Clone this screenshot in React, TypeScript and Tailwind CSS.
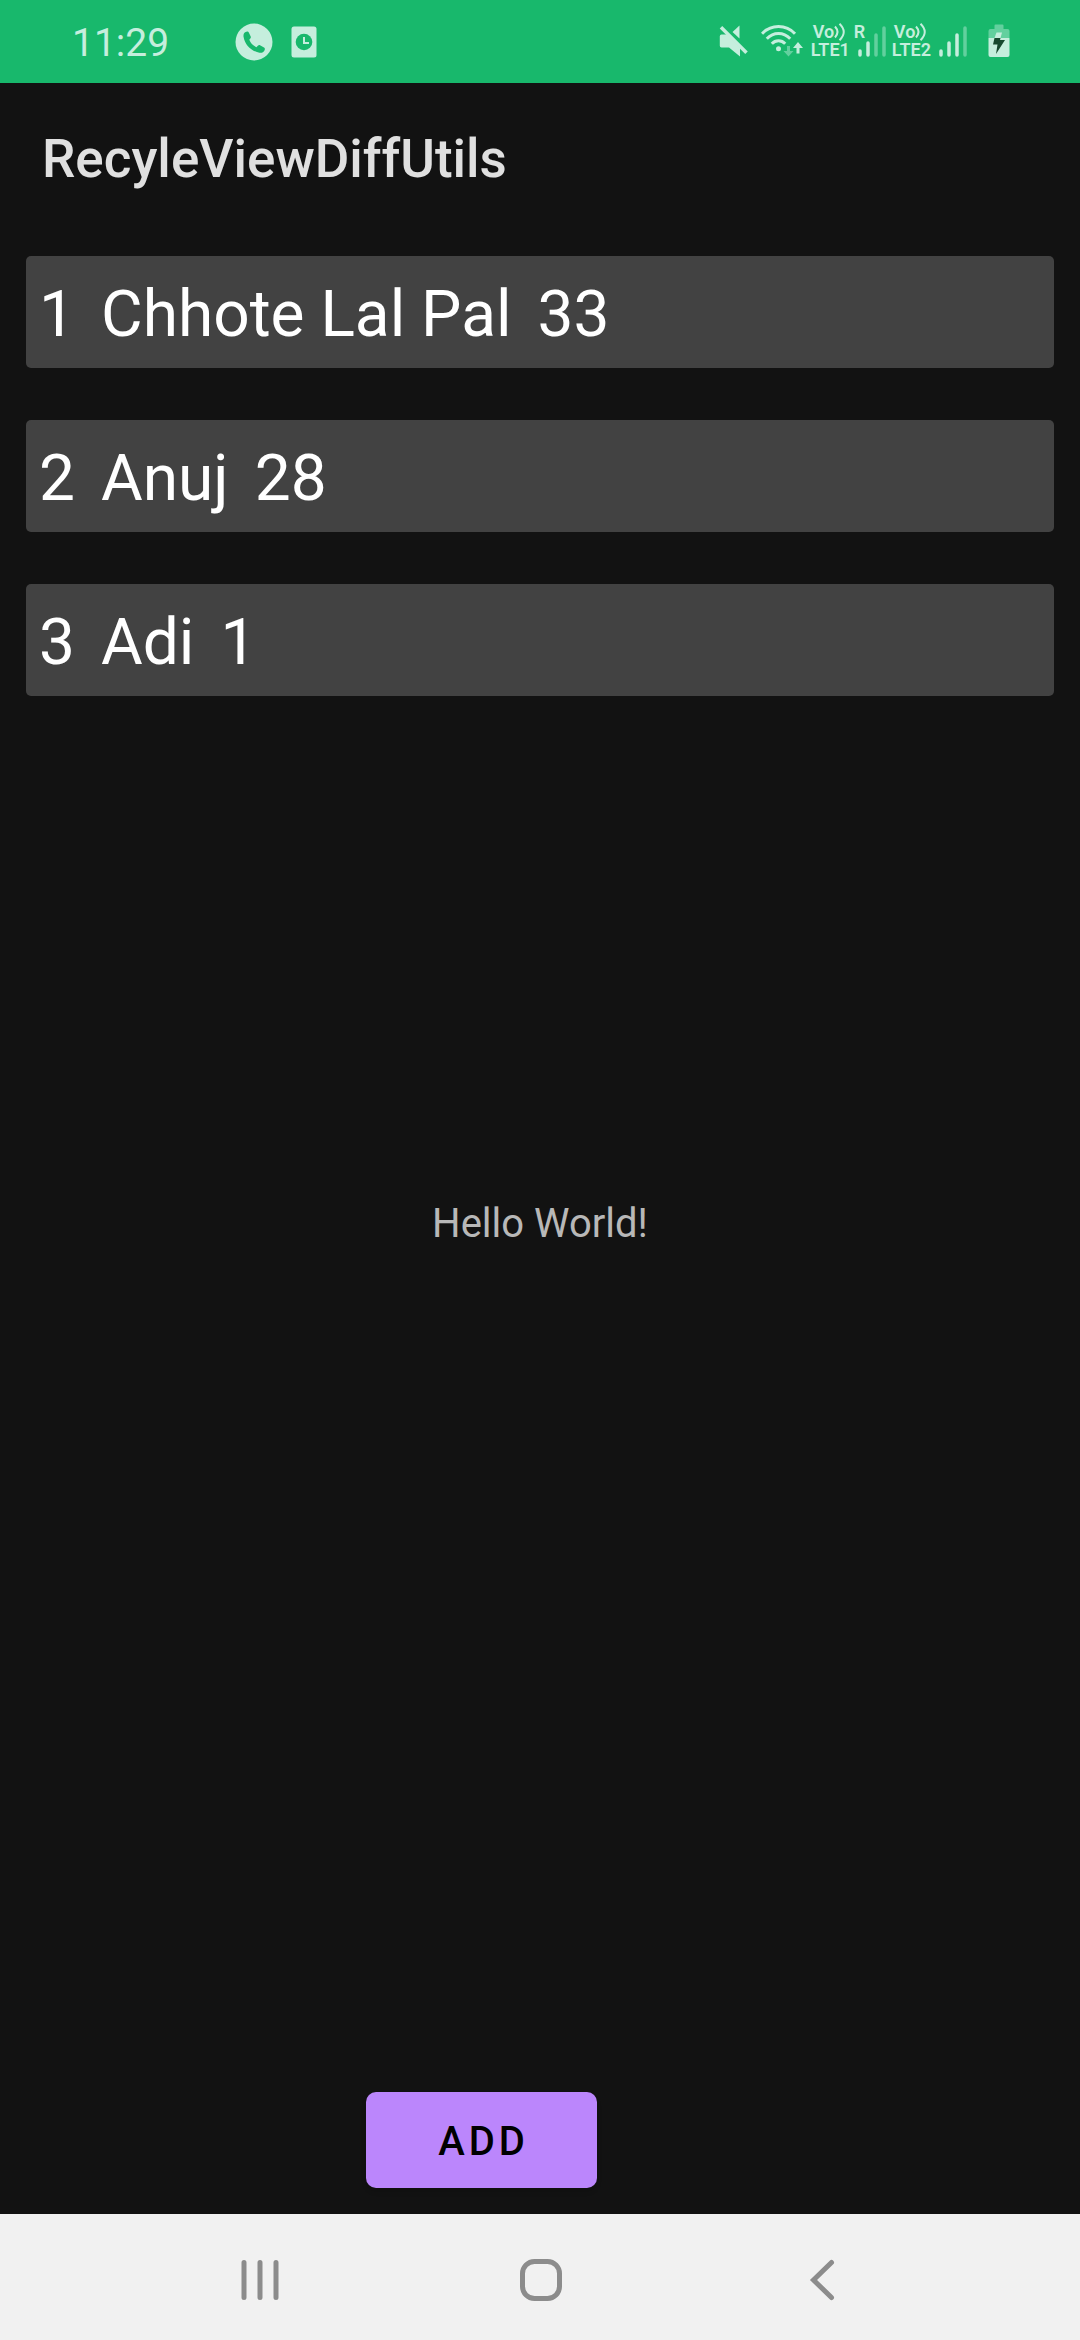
import React from "react";

const people = [
  { id: 1, name: "Chhote Lal Pal", age: 33 },
  { id: 2, name: "Anuj", age: 28 },
  { id: 3, name: "Adi", age: 1 },
];

function PhoneIcon() {
  return (
    <svg width="38" height="38" viewBox="0 0 38 38" aria-hidden="true">
      <circle cx="19" cy="19" r="18.5" fill="#c5eedd" />
      <path
        d="M12.2 8.6c-2.8.5-4.2 2.4-3.6 5.4 1.3 7.400 7 13.600 15 15.600 3 .7 5.600-.4 6.200-3.200.2-.9-.1-1.500-.8-1.900l-4-2.200c-.7-.4-1.400-.2-1.900.3l-1.700 1.600c-3.600-1.700-5.800-4.100-7.100-7.400l1.200-1.500c.4-.5.4-1.100.2-1.700l-1.900-4.200c-.3-.6-.9-.9-1.600-.8z"
        fill="#18b86c"
      />
    </svg>
  );
}

function DocClockIcon() {
  return (
    <svg width="26" height="32" viewBox="0 0 26 32" aria-hidden="true">
      <rect x="0.500" y="0.500" width="25" height="31" rx="2.500" fill="#c5eedd" />
      <circle cx="13" cy="16" r="8.300" fill="#18b86c" />
      <path d="M13 11v6h5" fill="none" stroke="#c5eedd" strokeWidth="2" />
    </svg>
  );
}

function MuteIcon() {
  return (
    <svg width="30" height="32" viewBox="0 0 30 32" aria-hidden="true">
      <path d="M20.500 0.500V13.500L13.500 7z" fill="#c5eedd" />
      <path d="M2.500 9.500H8L21 23V31.500L10 22.500H2.500Q0.800 22.500 0.800 20.800V11.200Q0.800 9.500 2.500 9.500z" fill="#c5eedd" />
      <path d="M3.800 0.300L29.500 26" stroke="#18b86c" strokeWidth="2" />
      <path d="M2 2.200L27.500 27.700" stroke="#c5eedd" strokeWidth="3.500" />
    </svg>
  );
}

function WifiIcon() {
  return (
    <svg width="42" height="32" viewBox="0 0 42 32" aria-hidden="true">
      <g fill="none" stroke="#c5eedd" strokeWidth="3">
        <path d="M1 8.800C10 -0.800 25 -0.800 34 8.800" />
        <path d="M5.800 13.800C12.500 6.800 22.500 6.800 29.200 13.800" />
        <path d="M10.800 18.800C14.500 14.800 20.500 14.800 24.200 18.800" />
      </g>
      <circle cx="17.500" cy="23.700" r="2.500" fill="#c5eedd" />
      <path d="M26 21h3v5h3.500l-5 5.500-5-5.500H26z" fill="#62d09e" />
      <path d="M35.500 28.500h3V23H42l-5-6-5 6h3.500z" fill="#c5eedd" />
    </svg>
  );
}

function VolteLabel({ sim }: { sim: number }) {
  return (
    <div className="flex flex-col text-[18px] leading-[18px] font-semibold">
      <span className="flex items-center pl-[2px]">
        Vo
        <svg width="12" height="18" viewBox="0 0 12 18" aria-hidden="true">
          <g fill="none" stroke="#c5eedd" strokeWidth="2">
            <path d="M1 3.500Q6 9 1 14.500" />
            <path d="M5.500 0.800Q14 9 5.500 17.200" />
          </g>
        </svg>
      </span>
      <span>LTE{sim}</span>
    </div>
  );
}

function SignalBars({ lit }: { lit: number }) {
  const bars = [
    { x: 2, y: 26 },
    { x: 10, y: 18 },
    { x: 18, y: 10 },
    { x: 26, y: 3 },
  ];
  return (
    <svg width="28" height="34" viewBox="0 0 28 34" aria-hidden="true">
      {bars.map((bar, i) => (
        <path
          key={bar.x}
          d={`M${bar.x} ${bar.y + 1}V31`}
          stroke={i < lit ? "#c5eedd" : "#62d09e"}
          strokeWidth="3.500"
          strokeLinecap="round"
        />
      ))}
    </svg>
  );
}

function BatteryIcon() {
  return (
    <svg width="22" height="34" viewBox="0 0 22 34" aria-hidden="true">
      <path d="M6.500 1.500Q6.500 0.500 7.500 0.500H14.500Q15.500 0.500 15.500 1.500V5H19.500Q21.500 5 21.500 7V14H0.500V7Q0.500 5 2.500 5H6.500z" fill="#62d09e" />
      <path d="M0.500 14H21.500V31Q21.500 33 19.500 33H2.500Q0.500 33 0.500 31z" fill="#c5eedd" />
      <path d="M8.500 8.500H14L12.500 14H6.500z" fill="#c5eedd" />
      <path d="M6.500 14H12.500L12 16H17L8 30L9.500 20.500H5z" fill="#17492f" />
    </svg>
  );
}

function StatusBar() {
  return (
    <div className="flex h-[83px] items-center justify-between bg-[#18b86c] pr-[70px] pl-[72px] text-[#c5eedd]">
      <div className="flex items-center">
        <time className="w-[163px] pt-[2px] text-[39px] leading-[48px]">11:29</time>
        <div className="flex items-center gap-[18px]">
          <PhoneIcon />
          <DocClockIcon />
        </div>
      </div>
      <div className="flex items-center pb-[2px]">
        <MuteIcon />
        <div className="ml-3">
          <WifiIcon />
        </div>
        <div className="ml-2">
          <VolteLabel sim={1} />
        </div>
        <div className="relative ml-[8px]">
          <SignalBars lit={2} />
          <span className="absolute -top-px -left-[4px] text-[18px] leading-[18px] font-semibold">R</span>
        </div>
        <div className="ml-[6px]">
          <VolteLabel sim={2} />
        </div>
        <div className="ml-2">
          <SignalBars lit={3} />
        </div>
        <div className="ml-[21px]">
          <BatteryIcon />
        </div>
      </div>
    </div>
  );
}

function NavigationBar() {
  return (
    <nav className="grid h-[126px] grid-cols-3 bg-[#f1f1f1] px-[120px] pt-[6px] text-[#8c8c8c]">
      <button type="button" aria-label="Recent apps" className="flex items-center justify-center">
        <svg width="44" height="44" viewBox="0 0 44 44" fill="none" stroke="currentColor" strokeWidth="5" strokeLinecap="round">
          <path d="M6 4.500V39.500M22 4.500V39.500M38 4.500V39.500" />
        </svg>
      </button>
      <button type="button" aria-label="Home" className="flex items-center justify-center">
        <svg width="44" height="44" viewBox="0 0 44 44" fill="none" stroke="currentColor" strokeWidth="5">
          <rect x="4.500" y="3.500" width="37" height="37" rx="12" />
        </svg>
      </button>
      <button type="button" aria-label="Back" className="flex items-center justify-center">
        <svg width="44" height="44" viewBox="0 0 44 44" fill="none" stroke="currentColor" strokeWidth="5" strokeLinecap="round">
          <path d="M33.500 4.500L15.500 22L33.500 39.500" />
        </svg>
      </button>
    </nav>
  );
}

export default function App() {
  return (
    <div className="flex min-h-screen flex-col bg-[#121212] font-[Roboto,sans-serif]">
      <StatusBar />
      <header className="flex h-[147px] items-center px-[42px] pt-[4px]">
        <h1 className="text-[53px] leading-[64px] font-medium text-[#e0e0e0]">RecyleViewDiffUtils</h1>
      </header>
      <main className="grid flex-1 grid-cols-1 grid-rows-1 p-[26px]">
        <ul className="col-start-1 row-start-1 flex flex-col gap-[52px] self-start">
          {people.map((person) => (
            <li
              key={person.id}
              className="flex h-[112px] items-center gap-[26px] rounded-[5px] bg-[#424242] px-[13px] pt-[6px] text-[64px] leading-[76px] text-white"
            >
              <span>{person.id}</span>
              <span>{person.name}</span>
              <span>{person.age}</span>
            </li>
          ))}
        </ul>
        <p className="col-start-1 row-start-1 place-self-center pt-[4px] text-[40px] leading-[48px] text-[#b8b8b8]">
          Hello World!
        </p>
        <button
          type="button"
          className="col-start-1 row-start-1 mr-[117px] h-24 w-[231px] self-end justify-self-center rounded-[10px] bg-[#bb86fc] pt-[4px] pl-[4px] text-[40px] leading-[48px] font-medium tracking-widest text-black shadow-md"
        >
          ADD
        </button>
      </main>
      <NavigationBar />
    </div>
  );
}
